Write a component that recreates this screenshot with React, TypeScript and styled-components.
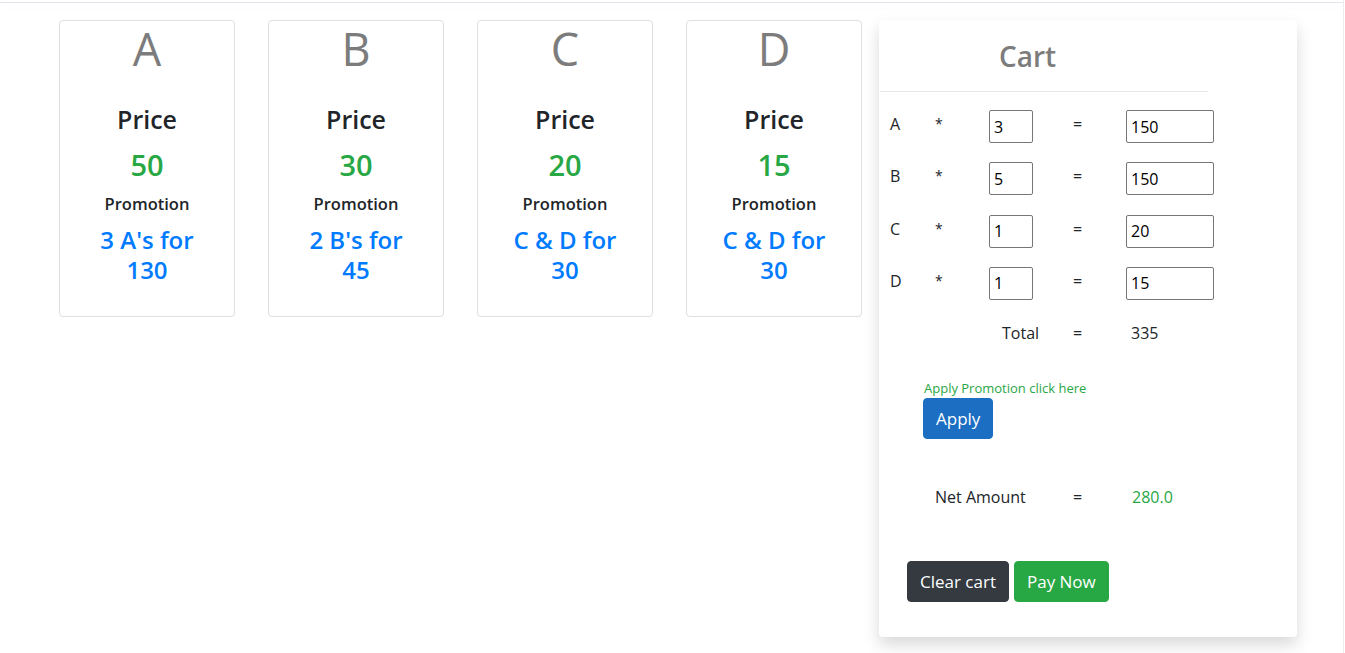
import React from "react";
import styled, { createGlobalStyle } from "styled-components";

const GlobalStyle = createGlobalStyle`
  html, body { margin: 0; padding: 0; background: #fff; }
  body {
    font-family: "Open Sans", "Noto Sans", "Liberation Sans", sans-serif;
    color: #212529;
    font-size: 16px;
  }
  * { box-sizing: border-box; }
`;

const Page = styled.div`
  width: 1344px;
  min-height: 653px;
  border-right: 1px solid #ececf1;
`;

const TopBar = styled.div`
  height: 3px;
  border-bottom: 1px solid #e4e3ee;
  box-shadow: 0 3px 12px rgba(0, 0, 0, 0.035);
`;

const Main = styled.div`
  display: flex;
  align-items: flex-start;
  padding: 17px 0 0 59px;
`;

const Products = styled.div`
  display: flex;
  gap: 33px;
`;

const Card = styled.div`
  width: 176px;
  height: 297px;
  border: 1px solid #dfdfe2;
  border-radius: 4px;
  display: flex;
  flex-direction: column;
  align-items: center;
  text-align: center;
`;

const Letter = styled.div`
  font-size: 45px;
  line-height: 56px;
  color: #7c7c7c;
  font-weight: 400;
`;

const PriceLabel = styled.div`
  margin-top: 26px;
  font-size: 25px;
  line-height: 32px;
  font-weight: 600;
  color: #212529;
`;

const PriceValue = styled.div`
  margin-top: 14px;
  font-size: 29px;
  line-height: 32px;
  font-weight: 600;
  color: #28a745;
`;

const PromoLabel = styled.div`
  margin-top: 11px;
  font-size: 16.5px;
  line-height: 24px;
  font-weight: 600;
  color: #212529;
`;

const PromoValue = styled.div`
  margin-top: 9px;
  width: 114px;
  font-size: 24px;
  line-height: 30px;
  font-weight: 600;
  color: #007bff;
`;

const Cart = styled.div`
  margin-left: 17px;
  width: 418px;
  height: 617px;
  background: #fff;
  border-radius: 4px;
  box-shadow: 0 8px 16px rgba(0, 0, 0, 0.15);
  display: flex;
  flex-direction: column;
`;

const CartHeader = styled.div`
  height: 71px;
  padding: 0 0 0 120px;
  display: flex;
  align-items: center;
  font-size: 28px;
  font-weight: 600;
  color: #7c7c7c;
`;

const Divider = styled.div`
  margin-left: 1px;
  width: 328px;
  height: 1px;
  background: #e6e6e6;
`;

const Grid = styled.div`
  display: grid;
  grid-template-columns: 45px 54px 84px 53px 110px;
  grid-auto-rows: 52.3px;
  padding-left: 11px;
  margin-top: 18px;
`;

const Cell = styled.div<{ $pad?: number; $span?: number; $green?: boolean }>`
  padding-top: 2px;
  padding-left: ${(p) => p.$pad ?? 0}px;
  grid-column: ${(p) => (p.$span ? `span ${p.$span}` : "auto")};
  font-size: 16px;
  line-height: 24px;
  color: ${(p) => (p.$green ? "#28a745" : "#212529")};
`;

const Star = styled(Cell)`
  font-size: 14px;
`;

const Input = styled.input<{ $w: number }>`
  width: ${(p) => p.$w}px;
  height: 33px;
  border: 1px solid #767676;
  border-radius: 2px;
  padding: 0 0 0 4px;
  font-family: "Open Sans", "Noto Sans", sans-serif;
  font-size: 16px;
  color: #000;
  background: #fff;
`;

const PromoBlock = styled.div`
  padding-left: 44px;
  margin-top: 7px;
  display: flex;
  flex-direction: column;
  align-items: flex-start;
`;

const PromoHint = styled.div`
  padding-left: 1px;
  font-size: 13px;
  line-height: 20px;
  color: #28a745;
`;

const Button = styled.button<{ $bg: string }>`
  font-family: "Open Sans", "Noto Sans", sans-serif;
  font-size: 17px;
  line-height: 27px;
  padding: 6px 12px;
  border: 1px solid ${(p) => p.$bg};
  border-radius: 4px;
  background: ${(p) => p.$bg};
  color: #fff;
  cursor: pointer;
`;

const NetGrid = styled(Grid)`
  margin-top: 44px;
  grid-auto-rows: 24px;
`;

const Actions = styled.div`
  display: flex;
  gap: 5px;
  padding-left: 28px;
  margin-top: 54px;
`;

const products = [
  { name: "A", price: 50, promo: "3 A's for 130" },
  { name: "B", price: 30, promo: "2 B's for 45" },
  { name: "C", price: 20, promo: "C & D for 30" },
  { name: "D", price: 15, promo: "C & D for 30" },
];

const rows = [
  { name: "A", qty: "3", total: "150" },
  { name: "B", qty: "5", total: "150" },
  { name: "C", qty: "1", total: "20" },
  { name: "D", qty: "1", total: "15" },
];

export default function App() {
  return (
    <>
      <GlobalStyle />
      <Page>
        <TopBar />
        <Main>
          <Products>
            {products.map((p) => (
              <Card key={p.name}>
                <Letter>{p.name}</Letter>
                <PriceLabel>Price</PriceLabel>
                <PriceValue>{p.price}</PriceValue>
                <PromoLabel>Promotion</PromoLabel>
                <PromoValue>{p.promo}</PromoValue>
              </Card>
            ))}
          </Products>
          <Cart>
            <CartHeader>Cart</CartHeader>
            <Divider />
            <Grid>
              {rows.map((r) => (
                <React.Fragment key={r.name}>
                  <Cell>{r.name}</Cell>
                  <Star>*</Star>
                  <div>
                    <Input $w={44} defaultValue={r.qty} />
                  </div>
                  <Cell>=</Cell>
                  <div>
                    <Input $w={88} defaultValue={r.total} />
                  </div>
                </React.Fragment>
              ))}
              <Cell />
              <Cell />
              <Cell $pad={13}>Total</Cell>
              <Cell>=</Cell>
              <Cell $pad={5}>335</Cell>
            </Grid>
            <PromoBlock>
              <PromoHint>Apply Promotion click here</PromoHint>
              <Button $bg="#1b6ec2">Apply</Button>
            </PromoBlock>
            <NetGrid>
              <Cell />
              <Cell $span={2}>Net Amount</Cell>
              <Cell>=</Cell>
              <Cell $pad={6} $green>
                280.0
              </Cell>
            </NetGrid>
            <Actions>
              <Button $bg="#343a40">Clear cart</Button>
              <Button $bg="#28a745">Pay Now</Button>
            </Actions>
          </Cart>
        </Main>
      </Page>
    </>
  );
}
